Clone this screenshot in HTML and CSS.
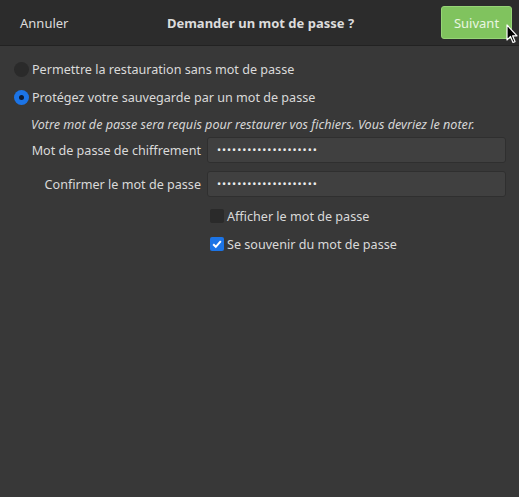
FILE: index.html
```html
<!DOCTYPE html>
<html lang="fr">
<head>
<meta charset="utf-8">
<link rel="stylesheet" href="styles.css">
</head>
<body>
<div class="window">
  <header class="headerbar">
    <button class="btn-cancel">Annuler</button>
    <div class="title">Demander un mot de passe ?</div>
    <button class="btn-next">Suivant</button>
    <svg class="cursor" width="12" height="20" viewBox="0 0 12 20"><path d="M1 1 L1 16 L4.5 12.5 L7 18.5 L9 17.6 L6.6 11.8 L11 11.8 Z" fill="#000" stroke="#fff" stroke-width="1.2" stroke-linejoin="round"/></svg>
  </header>
  <main class="content">
    <label class="radio-row"><span class="radio"></span><span>Permettre la restauration sans mot de passe</span></label>
    <label class="radio-row checked-row"><span class="radio checked"></span><span>Protégez votre sauvegarde par un mot de passe</span></label>
    <p class="note">Votre mot de passe sera requis pour restaurer vos fichiers. Vous devriez le noter.</p>
    <div class="form">
      <span class="label">Mot de passe de chiffrement</span>
      <div class="entry">••••••••••••••••••••</div>
      <span class="label">Confirmer le mot de passe</span>
      <div class="entry">••••••••••••••••••••</div>
      <span></span>
      <label class="check-row first-check"><span class="check"></span><span>Afficher le mot de passe</span></label>
      <span></span>
      <label class="check-row"><span class="check checked"><svg width="14" height="14" viewBox="0 0 14 14"><path d="M3.2 7.2 L5.8 9.8 L10.8 4.2" fill="none" stroke="#fff" stroke-width="2"/></svg></span><span>Se souvenir du mot de passe</span></label>
    </div>
  </main>
</div>
</body>
</html>
```
FILE: styles.css
```css
html, body {
  margin: 0;
  padding: 0;
  background: #383838;
}
body {
  font-family: "Noto Sans", "DejaVu Sans", sans-serif;
  font-size: 12.6px;
  color: #dadada;
}
.window {
  width: 519px;
  height: 497px;
  background: #383838;
  display: flex;
  flex-direction: column;
}
.headerbar {
  position: relative;
  height: 46px;
  box-sizing: border-box;
  background: #2c2c2c;
  border-bottom: 1px solid #222;
  display: flex;
  align-items: center;
  padding: 0 7px 0 8px;
}
.btn-cancel {
  background: transparent;
  border: none;
  color: #dcdcdc;
  font: inherit;
  font-size: 13px;
  padding: 0 12px;
  height: 32px;
}
.title {
  position: absolute;
  left: 0;
  right: 0;
  top: 0;
  bottom: 0;
  display: flex;
  align-items: center;
  justify-content: center;
  font-weight: bold;
  font-size: 13px;
  color: #dcdcdc;
  pointer-events: none;
  padding-left: 2px;
}
.btn-next {
  margin-left: auto;
  margin-right: 0;
  width: 71px;
  height: 33px;
  margin-top: 0;
  background: #80c35e;
  border: 1px solid #96d476;
  border-radius: 3px;
  color: #e9f6e1;
  font: inherit;
  font-size: 13px;
  padding: 0;
}
.cursor {
  position: absolute;
  left: 506px;
  top: 24px;
}
.content {
  padding: 13px 0 0 14px;
  display: flex;
  flex-direction: column;
}
.radio-row {
  display: flex;
  align-items: center;
  gap: 3px;
  height: 20px;
  margin-bottom: 8px;
}
.radio {
  width: 15px;
  height: 15px;
  border-radius: 50%;
  background: #2a2a2a;
  box-sizing: border-box;
  flex: none;
}
.radio.checked {
  background: #1c74e6;
  position: relative;
}
.radio.checked::after {
  content: "";
  position: absolute;
  left: 5px;
  top: 5px;
  width: 5px;
  height: 5px;
  border-radius: 50%;
  background: #0d1b33;
}
.note {
  margin: 0 0 0 17px;
  font-style: italic;
  color: #d6d6d6;
  height: 20px;
  line-height: 20px;
}
.form {
  display: grid;
  grid-template-columns: 187px 299px;
  column-gap: 6px;
  row-gap: 8px;
  margin-top: 2px;
  align-items: center;
}
.label {
  text-align: right;
  color: #dadada;
}
.entry {
  height: 26px;
  box-sizing: border-box;
  background: #404040;
  border: 1px solid #2f2f2f;
  border-radius: 3px;
  color: #ececec;
  font-size: 11px;
  line-height: 24px;
  padding-left: 9px;
  letter-spacing: 0.9px;
}
.check-row {
  display: flex;
  align-items: center;
  gap: 3px;
  height: 20px;
  margin-left: 3px;
}
.first-check {
  margin-top: 1px;
}
.check {
  width: 14px;
  height: 14px;
  border-radius: 2px;
  background: #2a2a2a;
  flex: none;
  display: flex;
}
.check.checked {
  background: #1c74e6;
}
```
